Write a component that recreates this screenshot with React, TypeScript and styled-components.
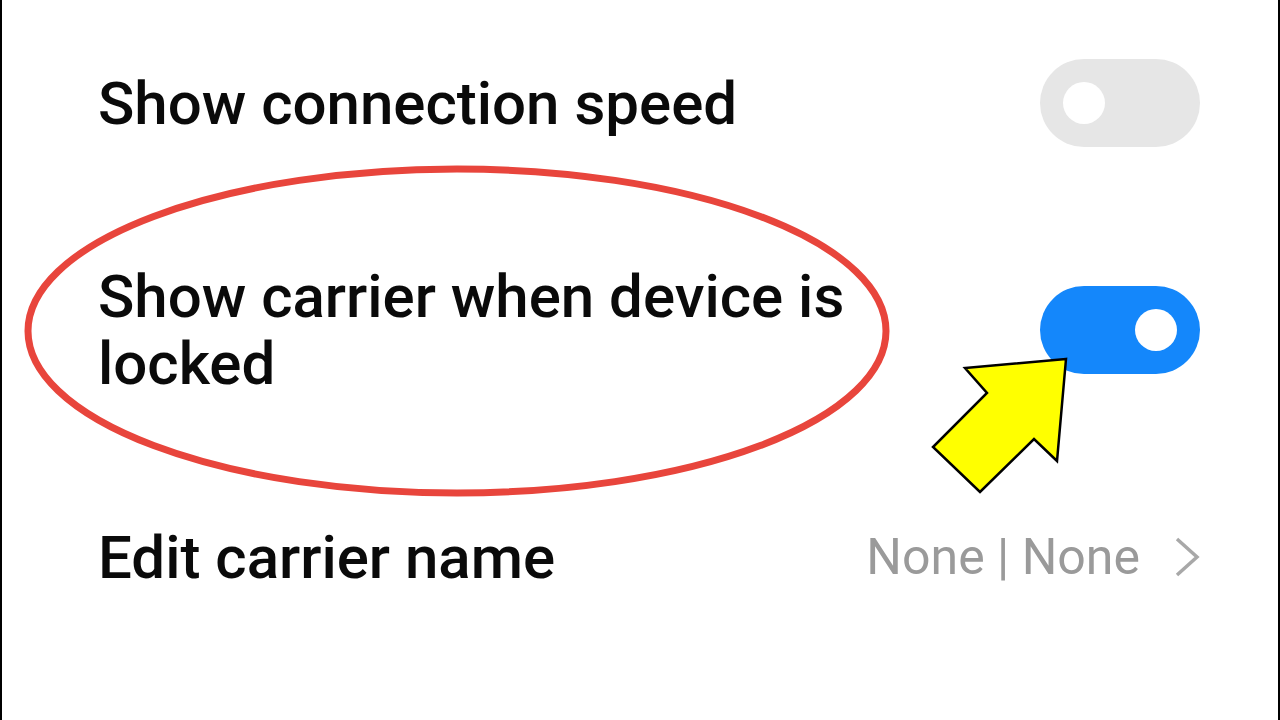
import React from "react";
import styled, { createGlobalStyle } from "styled-components";

const GlobalStyle = createGlobalStyle`
  html, body {
    margin: 0;
    padding: 0;
    background: #ffffff;
  }
  body {
    font-family: Roboto, "Noto Sans", sans-serif;
  }
`;

const Screen = styled.div`
  position: relative;
  box-sizing: border-box;
  width: 1280px;
  height: 720px;
  overflow: hidden;
  background: #ffffff;
  border-left: 2px solid #000;
  border-right: 2px solid #000;
  padding: 59px 78px 0 96px;
  display: flex;
  flex-direction: column;
  gap: 116px;
`;

const Row = styled.div`
  display: flex;
  align-items: center;
  justify-content: space-between;
  min-height: 88px;
`;

const Label = styled.div<{ $width?: number }>`
  font-size: 60px;
  line-height: 67px;
  color: #0a0a0a;
  font-weight: 500;
  max-width: ${(p) => (p.$width ? `${p.$width}px` : "none")};
`;

const Toggle = styled.div<{ $on: boolean }>`
  position: relative;
  flex: none;
  width: 160px;
  height: 88px;
  border-radius: 44px;
  background: ${(p) => (p.$on ? "#1487fb" : "#e6e6e6")};
`;

const Knob = styled.span<{ $on: boolean }>`
  position: absolute;
  top: 23px;
  left: ${(p) => (p.$on ? "95px" : "23px")};
  width: 42px;
  height: 42px;
  border-radius: 50%;
  background: #ffffff;
`;

const Value = styled.div`
  display: flex;
  align-items: center;
  gap: 34px;
  font-size: 50px;
  color: #9a9a9a;
`;

const Overlay = styled.svg`
  position: absolute;
  left: 0;
  top: 0;
  width: 1280px;
  height: 720px;
  pointer-events: none;
`;

export default function App() {
  return (
    <>
      <GlobalStyle />
      <Screen>
        <Row>
          <Label>Show connection speed</Label>
          <Toggle $on={false}>
            <Knob $on={false} />
          </Toggle>
        </Row>
        <Row>
          <Label $width={780}>Show carrier when device is locked</Label>
          <Toggle $on={true}>
            <Knob $on={true} />
          </Toggle>
        </Row>
        <Row>
          <Label>Edit carrier name</Label>
          <Value>
            <span>None | None</span>
            <svg width="26" height="42" viewBox="0 0 26 42">
              <path d="M3 3 L23 21 L3 39" fill="none" stroke="#a8a8a8" strokeWidth="3.5" />
            </svg>
          </Value>
        </Row>
        <Overlay viewBox="0 0 1280 720">
          <ellipse cx="455" cy="331" rx="429" ry="162" fill="none" stroke="#e8453c" strokeWidth="7" />
          <polygon
            points="1064,359 963,368 985,393 931,447 978,492 1032,439 1055,461"
            fill="#ffff00"
            stroke="#000"
            strokeWidth="2.5"
            strokeLinejoin="miter"
          />
        </Overlay>
      </Screen>
    </>
  );
}
